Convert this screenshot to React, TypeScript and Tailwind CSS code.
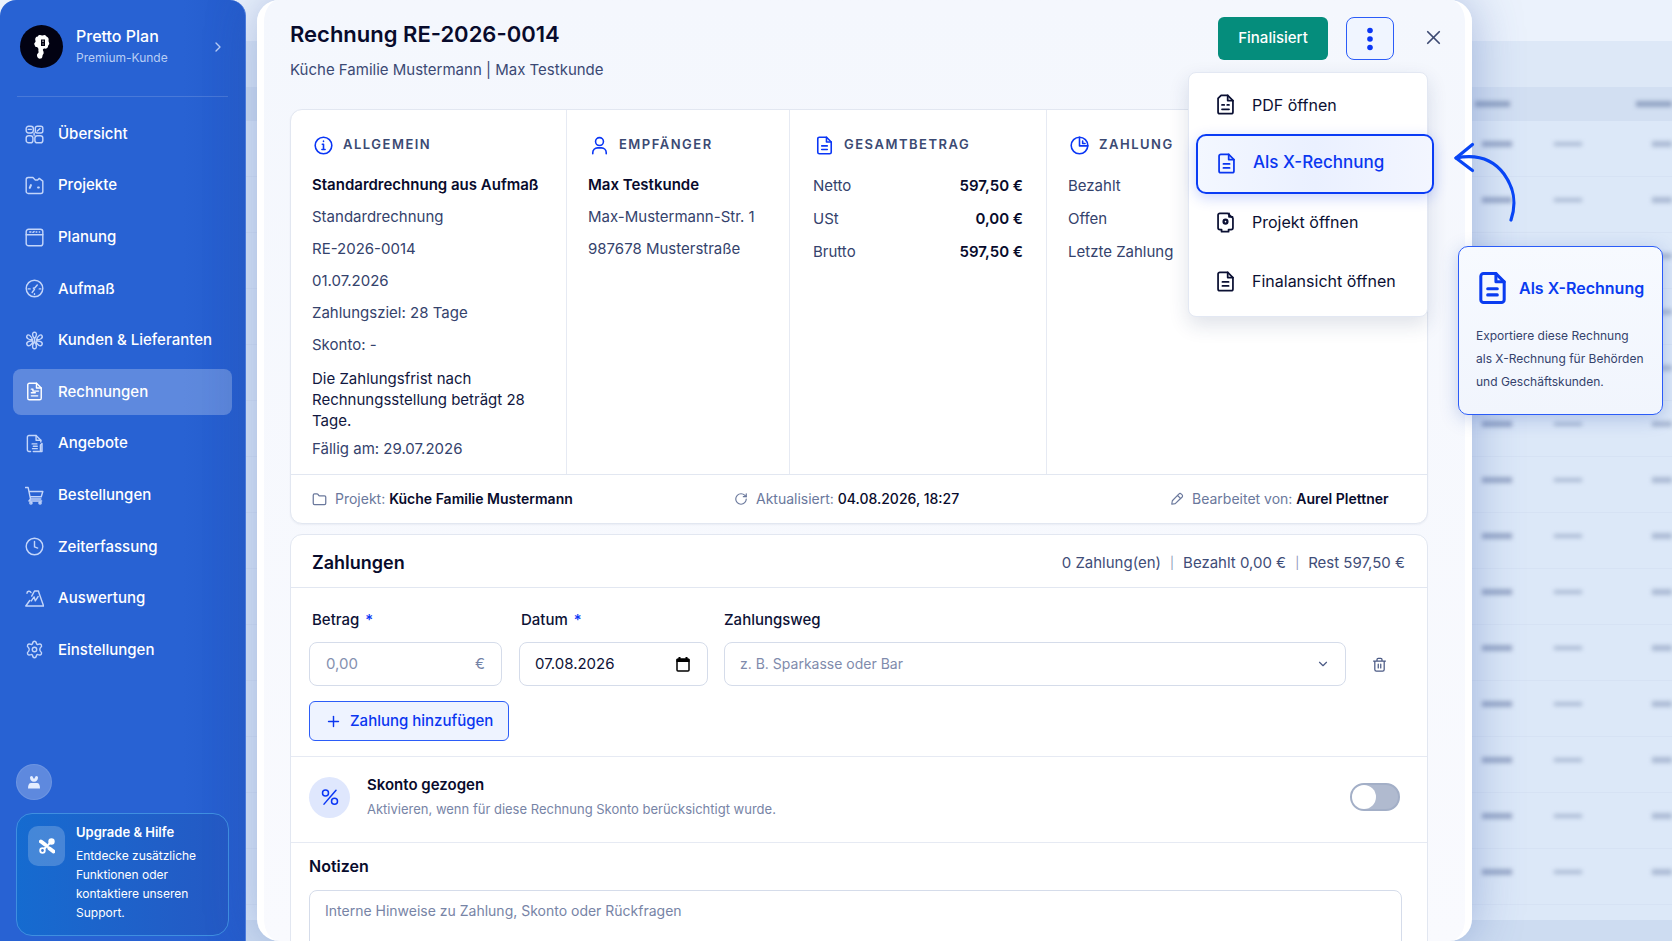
import React from 'react';
import { ChevronDown, ChevronRight, Folder, Plus, RotateCw, X } from 'lucide-react';

type IconProps = { className?: string; strokeWidth?: number };

const Svg: React.FC<IconProps & { children: React.ReactNode }> = ({ className, strokeWidth = 1.8, children }) => (
  <svg
    viewBox="0 0 24 24"
    fill="none"
    stroke="currentColor"
    strokeWidth={strokeWidth}
    strokeLinecap="round"
    strokeLinejoin="round"
    className={className}
    aria-hidden="true"
  >
    {children}
  </svg>
);

const GridIcon = (p: IconProps) => (
  <Svg {...p}>
    <rect x="1.5" y="1.5" width="9" height="8.5" rx="3" />
    <rect x="13" y="1.5" width="9.5" height="8.5" rx="2.5" />
    <rect x="1.5" y="13.5" width="8.5" height="9" rx="3" />
    <rect x="12.5" y="13.5" width="10" height="9" rx="3" />
    <path d="M4 5.5h4M15.5 7.5l3.5-3M11.5 10v3" />
  </Svg>
);

const ProjectIcon = (p: IconProps) => (
  <Svg {...p}>
    <path d="M1.5 4.5a2.5 2.5 0 0 1 2.5-2.5h6l3 3h3l2-2 4.5 3.5v13a2.5 2.5 0 0 1-2.5 2.5H4a2.5 2.5 0 0 1-2.5-2.5z" />
    <path d="M7.5 11.5L6 15M16.5 14.5h1" strokeWidth={2.6} />
  </Svg>
);

const PlanIcon = (p: IconProps) => (
  <Svg {...p}>
    <rect x="1.5" y="1.5" width="21" height="21" rx="3" />
    <path d="M1.5 8.5h21M6 5h1.5M10 5.5l1.5-1M14 5h1M18 5h.5" />
  </Svg>
);

const GaugeIcon = (p: IconProps) => (
  <Svg {...p}>
    <circle cx="12" cy="12" r="10.5" />
    <path d="M15.5 7.5l-3 3.5-2 .5 1.5 1.5-3 4M4 12.5h2.5M18 12.5h2M12 18.5v1" />
  </Svg>
);

const FlowerIcon = (p: IconProps) => (
  <Svg {...p}>
    <path d="M12 9.5c-3-3-3.500-8 0-8s3 5 0 8zM9.500 11C5 11.500 1 9 2.500 6S8 6.500 9.500 11zM14.500 11c4.500.5 8.500-2 7-5s-5.500.5-7 5zM10 13c-4-1-9 1-7.500 4.200S9 18 10 13zM14 13c4-1 9 1 7.500 4.200S15 18 14 13zM12 14c-3 3-3.500 8.500 0 8.500s3-5.500 0-8.500z" />
    <path d="M12 9.500v4.500" />
  </Svg>
);

const DocIcon = (p: IconProps) => (
  <Svg {...p}>
    <path d="M14.500 1.500H5.500a2 2 0 0 0-2 2v17a2 2 0 0 0 2 2h13a2 2 0 0 0 2-2v-13z" />
    <path d="M14.500 1.500v6h6M8.500 12.500h7M8.500 17h7" />
  </Svg>
);

const InvoiceIcon = (p: IconProps) => (
  <Svg {...p}>
    <path d="M14.500 1.500H5.500a2 2 0 0 0-2 2v17a2 2 0 0 0 2 2h13a2 2 0 0 0 2-2v-13z" />
    <path d="M14.500 1.500v6h6M8 9h2v2.500h7M8 13.500h5M8 17.500h8" />
  </Svg>
);

const OfferIcon = (p: IconProps) => (
  <Svg {...p}>
    <path d="M7 22H5a2 2 0 0 1-2-2V4a2 2 0 0 1 2-2h9l6 6v2" />
    <path d="M14 2v6h6M9 12.500h6M10.500 15.500h5M9.500 18.500h6M10.500 22h11v-10l-2 2v7" />
  </Svg>
);

const PdfIcon = (p: IconProps) => (
  <Svg {...p}>
    <path d="M14.500 1.500H7L3.500 5v15.500a2 2 0 0 0 2 2h13a2 2 0 0 0 2-2v-13z" />
    <path d="M14.500 1.500v6h6M8 12.500h2.500M14 12.500h2M8 17.500h8" />
  </Svg>
);

const ProjectDocIcon = (p: IconProps) => (
  <Svg {...p}>
    <path d="M14.500 1.500h-9a2 2 0 0 0-2 2V18a2 2 0 0 0 2 2h2v2.500h8V20h3a2 2 0 0 0 2-2V7z" />
    <path d="M16 1.500v4h4" />
    <circle cx="12" cy="11" r="2.200" strokeWidth={2.6} />
  </Svg>
);

const CartIcon = (p: IconProps) => (
  <Svg {...p}>
    <path d="M.5 2h3.500l3 14.500h13M5.500 7H22.500l-2 6.500H6.500M7 16.500l-2 2.500h16" />
    <circle cx="7.500" cy="21.500" r="1.400" />
    <circle cx="19" cy="21.500" r="1.400" />
  </Svg>
);

const ClockIcon = (p: IconProps) => (
  <Svg {...p}>
    <circle cx="12" cy="12" r="10.500" />
    <path d="M12 5.500v7l4 1.500" />
  </Svg>
);

const ChartIcon = (p: IconProps) => (
  <Svg {...p}>
    <path d="M1 21.500h22.500l-6-17M6 14.500l-5 7M2.500 5.500c0-3 4-3.500 5-1M8.500 9l3.500-6.500h5l.500 2M8 15l3.500-5 1.500 5 3.500-5.500" />
  </Svg>
);

const GearIcon = (p: IconProps) => (
  <Svg {...p}>
    <path d="M9.500 4.500c.5-4 4.500-4 5 0 .3 1 1 1.500 2 1 4-1.500 6 1.800 3 4.300-1 1-1 3.400 0 4.400 3 2.500 1 5.800-3 4.300-1-.5-1.700 0-2 1-.5 4-4.500 4-5 0-.3-1-1-1.500-2-1-4 1.500-6-1.800-3-4.300 1-1 1-3.400 0-4.400-3-2.500-1-5.800 3-4.300 1 .5 1.700 0 2-1z" />
    <circle cx="12" cy="12" r="2.800" />
  </Svg>
);

const InfoIcon = (p: IconProps) => (
  <Svg {...p}>
    <circle cx="12" cy="12" r="10.500" />
    <path d="M10.500 10.500H12V17M10 17h4M12 6.500v.5" />
  </Svg>
);

const PersonIcon = (p: IconProps) => (
  <Svg {...p}>
    <circle cx="12" cy="7" r="5" />
    <path d="M3.500 22.500v-1.500a6 6 0 0 1 6-6h5a6 6 0 0 1 6 6v1.500" />
  </Svg>
);

const PieIcon = (p: IconProps) => (
  <Svg {...p}>
    <circle cx="12" cy="12" r="10.500" />
    <path d="M12 1.500V12.500h10.500M16 6.500v3h3" />
  </Svg>
);

const PencilIcon = (p: IconProps) => (
  <Svg {...p}>
    <path d="M3 21l1-6L15 3.500a3 3 0 0 1 4.500 0l1 1a3 3 0 0 1 0 4.500L9 20zM13 6l5 5-6 6" />
  </Svg>
);

const TrashIcon = (p: IconProps) => (
  <Svg {...p}>
    <path d="M2.500 6.500h19M8 6.500V4a2 2 0 0 1 2-2h4a2 2 0 0 1 2 2v2.500M4.500 6.500v13.500a2.500 2.500 0 0 0 2.500 2.500h10a2.500 2.500 0 0 0 2.500-2.500V6.500M10 11.500v6M14 11.500v6" />
  </Svg>
);

const PercentIcon = (p: IconProps) => (
  <Svg {...p}>
    <circle cx="6" cy="6.500" r="4" />
    <circle cx="18" cy="17.500" r="4" />
    <path d="M20 3L4 21.500" />
  </Svg>
);

const CalendarIcon = ({ className }: IconProps) => (
  <svg viewBox="0 0 16 17" fill="none" stroke="currentColor" className={className} aria-hidden="true">
    <rect x="2" y="3" width="12" height="12" rx="1" strokeWidth="1.5" />
    <path d="M1.500 4.500h13" strokeWidth="3" />
    <path d="M4.500 1v3M11.500 1v3" strokeWidth="2" />
  </svg>
);

const navItems = [
  { label: 'Übersicht', icon: GridIcon },
  { label: 'Projekte', icon: ProjectIcon },
  { label: 'Planung', icon: PlanIcon },
  { label: 'Aufmaß', icon: GaugeIcon },
  { label: 'Kunden & Lieferanten', icon: FlowerIcon },
  { label: 'Rechnungen', icon: InvoiceIcon, active: true },
  { label: 'Angebote', icon: OfferIcon },
  { label: 'Bestellungen', icon: CartIcon },
  { label: 'Zeiterfassung', icon: ClockIcon },
  { label: 'Auswertung', icon: ChartIcon },
  { label: 'Einstellungen', icon: GearIcon },
];

const totals = [
  ['Netto', '597,50 €'],
  ['USt', '0,00 €'],
  ['Brutto', '597,50 €'],
];

const Sidebar: React.FC = () => (
  <aside className="flex w-[246px] shrink-0 flex-col rounded-t-2xl border-r border-[#4f7fe0] bg-linear-to-r from-[#2862d3] from-75% to-[#245bcb] px-[13px] text-white">
    <button className="mx-1 flex h-[97px] items-center border-b border-white/15 pb-[3px] pl-[3px] text-left">
      <span className="flex size-[43px] items-center justify-center rounded-full bg-[#020212]">
        <svg viewBox="0 0 18 26" className="h-[26px] w-[18px]" aria-hidden="true">
          <path
            fill="#fff"
            fillRule="evenodd"
            d="M5 2c1-1.500 3-1 4-.5s3-1.500 4 .5c.5 1 2 1 2.500 2.500s-.5 2 .5 4-1 2.500-1 4-2 2.500-3.500 2c-1-.3-2 1-1.500 2 .8 1.500 1 3 0 4s0 3.500-2 4-4-.5-4-3 2-2 1.500-4 .5-2-.5-3.500-2.500 0-3-2S.500 10 2 8.500 1.500 6 2.500 4 4 3.500 5 2zM8 5.500v6.500h4V5.500z"
          />
          <path fill="#fff" d="M9.500 6.500h1v1.500h-1zM9.500 9.500h1v1h-1z" />
        </svg>
      </span>
      <span className="ml-[13px] flex-1">
        <span className="block text-base leading-[22px] font-medium">Pretto Plan</span>
        <span className="block text-xs leading-[22px] text-[#b9cef5]">Premium-Kunde</span>
      </span>
      <ChevronRight className="mr-0.5 size-4 text-[#b9cef5]" />
    </button>

    <nav className="mt-3.5 flex flex-1 flex-col justify-between">
      {navItems.map(({ label, icon: Icon, active }) => (
        <a
          key={label}
          href="#"
          className={`flex h-[46px] items-center gap-[14px] rounded-lg pl-3 text-[15px] font-medium ${active ? 'bg-white/25' : ''}`}
        >
          <Icon className={`size-[19px] ${active ? 'text-white' : 'text-[#c3d5fa]'}`} />
          {label}
        </a>
      ))}
    </nav>

    <button
      aria-label="Profil"
      className="mt-[91px] ml-[3px] flex size-9 items-center justify-center rounded-full border border-white/10 bg-white/25"
    >
      <svg viewBox="0 0 14 14" className="size-3.5" fill="#e4edff" aria-hidden="true">
        <path d="M1 13.500c0-3.500 1-5.500 3-5.500h6c2 0 3 2 3 5.500z" />
        <path d="M3 2.500a1.500 1.500 0 0 1 3 0l1 1.500 1-1.500a1.500 1.500 0 0 1 3 0c0 2.500-1.500 4.200-4 4.200s-4-1.700-4-4.200z" />
      </svg>
    </button>

    <section className="mx-[3px] mt-[13px] mb-[5px] flex h-[123px] gap-[11px] rounded-2xl border border-[#3f8fe0] bg-linear-to-r from-[#156bd0] to-[#2459c4] pt-2.5 pl-[11px]">
      <span className="mt-0.5 flex h-10 w-[37px] shrink-0 items-center justify-center rounded-[10px] bg-white/20">
        <svg viewBox="0 0 16 16" className="size-4" aria-hidden="true">
          <path d="M2 3.500l4 3M10.500 10.500l4 3" stroke="#fff" strokeWidth="4" strokeLinecap="round" />
          <path d="M6 6l4.500 4.500M11 5L5 11" stroke="#fff" strokeWidth="2" />
          <circle cx="12.500" cy="3.500" r="3.200" fill="#fff" />
          <circle cx="3.500" cy="12.500" r="2.300" fill="#3a78d4" stroke="#fff" strokeWidth="1.800" />
        </svg>
      </span>
      <div>
        <h2 className="text-[13px] leading-4 font-semibold">Upgrade &amp; Hilfe</h2>
        <p className="mt-1.5 w-[130px] text-xs leading-[19px]">
          Entdecke zusätzliche Funktionen oder kontaktiere unseren Support.
        </p>
      </div>
    </section>
  </aside>
);

const ColumnTitle: React.FC<{ icon: React.FC<IconProps>; children: string }> = ({ icon: Icon, children }) => (
  <h2 className="mb-3 flex h-6 items-center gap-2.5 pl-0.5 text-[13px] font-semibold tracking-[1.5px] text-[#3b4a73]">
    <Icon className="size-[19px] text-[#0a36f5]" strokeWidth={2} />
    {children}
  </h2>
);

const ActionMenu: React.FC = () => (
  <div
    role="menu"
    className="absolute top-[72px] right-[37px] z-10 w-[240px] rounded-lg border border-[#e3e8f3] bg-white pb-1 text-base text-[#0b1033] shadow-[0_8px_20px_rgba(30,50,100,0.14)]"
  >
    <button role="menuitem" className="flex h-[61px] w-full items-center gap-4 pt-0.5 pl-[26px]">
      <PdfIcon className="size-[21px]" strokeWidth={2} />
      PDF öffnen
    </button>
    <button
      role="menuitem"
      className="ml-[7px] flex h-[60px] w-[238px] items-center gap-4 rounded-[10px] border-2 border-[#0a3cf5] bg-linear-to-r from-[#f3f7ff] via-[#eaf0ff] to-[#f3f6ff] pb-0.5 pl-[18px] text-[17px] font-medium text-[#0a36f0] shadow-[0_4px_14px_rgba(20,70,240,0.22)]"
    >
      <DocIcon className="size-[21px]" strokeWidth={2} />
      Als X-Rechnung
    </button>
    <button role="menuitem" className="flex h-[59px] w-full items-center gap-4 pb-[3px] pl-[26px]">
      <ProjectDocIcon className="size-[21px]" strokeWidth={2} />
      Projekt öffnen
    </button>
    <button role="menuitem" className="flex h-[59px] w-full items-center gap-4 pb-[3px] pl-[26px]">
      <DocIcon className="size-[21px]" strokeWidth={2} />
      Finalansicht öffnen
    </button>
  </div>
);

const InvoiceCard: React.FC = () => (
  <section className="rounded-xl border border-[#e2e7f1] bg-white text-[15px] shadow-[0_1px_2px_rgba(30,50,100,0.06)]">
    <div className="grid grid-cols-[276fr_223fr_257fr_380fr] divide-x divide-[#e6eaf3] text-[#34426c]">
      <div className="px-[21px] pt-[23px] pb-[9px]">
        <ColumnTitle icon={InfoIcon}>ALLGEMEIN</ColumnTitle>
        <p className="leading-8 font-semibold whitespace-nowrap text-[#080b2c]">Standardrechnung aus Aufmaß</p>
        <p className="leading-8">Standardrechnung</p>
        <p className="leading-8">RE-2026-0014</p>
        <p className="leading-8">01.07.2026</p>
        <p className="leading-8">Zahlungsziel: 28 Tage</p>
        <p className="leading-8">Skonto: -</p>
        <p className="my-[7px] mb-0.5 leading-[21px] text-[#111740]">
          Die Zahlungsfrist nach Rechnungsstellung beträgt 28 Tage.
        </p>
        <p className="leading-8">Fällig am: 29.07.2026</p>
      </div>
      <div className="px-[21px] pt-[23px]">
        <ColumnTitle icon={PersonIcon}>EMPFÄNGER</ColumnTitle>
        <p className="leading-8 font-semibold text-[#080b2c]">Max Testkunde</p>
        <p className="leading-8">Max-Mustermann-Str. 1</p>
        <p className="leading-8">987678 Musterstraße</p>
      </div>
      <div className="px-[23px] pt-[23px]">
        <ColumnTitle icon={DocIcon}>GESAMTBETRAG</ColumnTitle>
        <dl>
          {totals.map(([label, value]) => (
            <div key={label} className="flex justify-between leading-[33px]">
              <dt>{label}</dt>
              <dd className="font-semibold text-[#080b2c]">{value}</dd>
            </div>
          ))}
        </dl>
      </div>
      <div className="px-[21px] pt-[23px]">
        <ColumnTitle icon={PieIcon}>ZAHLUNG</ColumnTitle>
        <p className="leading-[33px]">Bezahlt</p>
        <p className="leading-[33px]">Offen</p>
        <p className="leading-[33px]">Letzte Zahlung</p>
      </div>
    </div>
    <div className="grid h-[49px] grid-cols-[422fr_436fr_257fr] items-center border-t border-[#e2e7f1] pl-[21px] text-sm text-[#6a789c]">
      <p className="flex items-center gap-2">
        <Folder className="size-[15px]" />
        <span>
          Projekt: <strong className="font-semibold text-[#080b2c]">Küche Familie Mustermann</strong>
        </span>
      </p>
      <p className="flex items-center gap-2">
        <RotateCw className="size-3.5" />
        <span>
          Aktualisiert: <strong className="font-medium text-[#080b2c]">04.08.2026, 18:27</strong>
        </span>
      </p>
      <p className="flex items-center gap-2">
        <PencilIcon className="size-3.5" strokeWidth={2} />
        <span>
          Bearbeitet von: <strong className="font-semibold text-[#080b2c]">Aurel Plettner</strong>
        </span>
      </p>
    </div>
  </section>
);

const PaymentsCard: React.FC = () => (
  <section className="mt-2.5 rounded-t-xl border border-[#e2e7f1] bg-white">
    <header className="flex h-[53px] items-center justify-between border-b border-[#e2e7f1] pt-1 pr-[22px] pl-[21px]">
      <h2 className="text-lg font-semibold text-[#080b2c]">Zahlungen</h2>
      <p className="flex items-center gap-[9px] text-[15px] text-[#3f4d78]">
        <span>0 Zahlung(en)</span>
        <span className="text-xs text-[#8c98b8]">|</span>
        <span>Bezahlt 0,00 €</span>
        <span className="text-xs text-[#8c98b8]">|</span>
        <span>Rest 597,50 €</span>
      </p>
    </header>

    <form className="border-b border-[#e6eaf3] px-[18px] pb-[15px]">
      <div className="flex items-end text-[15px] text-[#0d1236]">
        <div className="w-[193px]">
          <label htmlFor="betrag" className="ml-[3px] block pt-5 leading-6 font-medium">
            Betrag <span className="ml-0.5 text-[#0a36f5]">*</span>
          </label>
          <div className="mt-2.5 flex h-11 items-center rounded-lg border border-[#d5dcea] pr-4 pl-4 text-[#7482a6]">
            <input id="betrag" placeholder="0,00" className="w-full min-w-0 outline-none placeholder:text-[#8591b0]" />
            <span>€</span>
          </div>
        </div>
        <div className="ml-[17px] w-[189px]">
          <label htmlFor="datum" className="ml-0.5 block pt-5 leading-6 font-medium">
            Datum <span className="ml-0.5 text-[#0a36f5]">*</span>
          </label>
          <div className="mt-2.5 flex h-11 items-center rounded-lg border border-[#d5dcea] pr-4 pl-[15px]">
            <input id="datum" defaultValue="07.08.2026" className="w-full min-w-0 outline-none" />
            <CalendarIcon className="h-[17px] w-4 shrink-0 text-black" />
          </div>
        </div>
        <div className="ml-4 flex-1">
          <label htmlFor="zahlungsweg" className="block pt-5 leading-6 font-medium">
            Zahlungsweg
          </label>
          <div className="mt-2.5 grid h-11 items-center rounded-lg border border-[#d5dcea]">
            <select
              id="zahlungsweg"
              className="col-start-1 row-start-1 h-full w-full appearance-none pl-[15px] text-sm text-[#7f8bac] outline-none"
            >
              <option>z. B. Sparkasse oder Bar</option>
            </select>
            <ChevronDown className="pointer-events-none col-start-1 row-start-1 mr-[15px] size-3.5 justify-self-end text-[#4b5a85]" />
          </div>
        </div>
        <button type="button" aria-label="Zahlung löschen" className="mr-5 ml-[23px] flex h-11 w-5 items-center justify-center text-[#4b5a85]">
          <TrashIcon className="size-[15px]" strokeWidth={2} />
        </button>
      </div>
      <button
        type="button"
        className="mt-[15px] flex h-10 items-center gap-2 rounded-md border border-[#2b5cf8] bg-[#eef3ff] px-[15px] text-[15px] font-medium text-[#0a36f0]"
      >
        <Plus className="size-[17px]" />
        Zahlung hinzufügen
      </button>
    </form>

    <div className="flex h-[86px] items-center border-b border-[#e6eaf3] pr-[27px] pb-[5px] pl-[18px]">
      <span className="flex size-[41px] items-center justify-center rounded-full bg-[#dfe7fd]">
        <PercentIcon className="size-[18px] text-[#0a36f5]" strokeWidth={2} />
      </span>
      <label htmlFor="skonto" className="ml-[17px] flex-1">
        <span className="block text-[15px] leading-6 font-semibold text-[#080b2c]">Skonto gezogen</span>
        <span className="block text-[13px] leading-6 text-[#7784a6]">Aktivieren, wenn für diese Rechnung Skonto berücksichtigt wurde.</span>
      </label>
      <input
        id="skonto"
        type="checkbox"
        role="switch"
        className="h-7 w-[50px] appearance-none rounded-full border-2 border-[#a3afc7] bg-[#b0bacf] before:block before:size-6 before:rounded-full before:bg-white checked:bg-[#0a36f5] checked:before:ml-[22px]"
      />
    </div>

    <div className="pt-[11px] pr-[25px] pl-[18px]">
      <label htmlFor="notizen" className="block text-base leading-6 font-semibold text-[#080b2c]">
        Notizen
      </label>
      <textarea
        id="notizen"
        placeholder="Interne Hinweise zu Zahlung, Skonto oder Rückfragen"
        className="mt-3 block h-[120px] w-full resize-none rounded-lg border border-[#d5dcea] px-[15px] py-2 text-sm leading-6 outline-none placeholder:text-[#7784a6]"
      />
    </div>
  </section>
);

// Blurred invoice list that lies behind the dialog
const Backdrop: React.FC = () => (
  <div className="absolute inset-0 flex flex-col overflow-hidden bg-[#dce8f8]" aria-hidden="true">
    <div className="h-[41px] shrink-0 bg-[#ebf2fc]" />
    <div className="h-[46px] shrink-0 bg-[#dde8f7]" />
    <div className="flex h-[34px] shrink-0 items-center justify-end bg-[#d2dff2]">
      <span className="mr-[126px] h-1.5 w-[35px] bg-[#94a5c4] blur-[2px]" />
      <span className="h-1.5 w-9 bg-[#94a5c4] blur-[2px]" />
    </div>
    <div className="flex-1 overflow-hidden">
      {Array.from({ length: 14 }, (_, i) => (
        <div key={i} className="flex h-14 items-center justify-end border-b border-[#d6e2f4] pb-2.5">
          <span className="mr-[42px] h-1.5 w-[30px] bg-[#9cacca] blur-[2px]" />
          <span className="mr-[70px] h-1 w-7 bg-[#acbbd5] blur-[2px]" />
          <span className="h-1.5 w-5 bg-[#acbbd5] blur-[2px]" />
        </div>
      ))}
    </div>
    <div className="h-[21px] shrink-0 bg-[#cddcf1]" />
  </div>
);

const App: React.FC = () => {
  return (
    <div className="relative flex h-screen overflow-hidden font-[Inter,'Liberation_Sans',sans-serif]">
      <Backdrop />
      <div className="relative flex w-full gap-[11px]">
        <Sidebar />
        <main className="relative mr-[200px] min-w-0 flex-1 rounded-[22px] border-x-[7px] border-white bg-linear-to-b from-[#f4f7fd] to-[#f9fafe] shadow-[0_0_50px_rgba(60,95,175,0.4)]">
          <header className="flex h-[109px] items-start pr-5 pl-[26px]">
            <div className="flex-1 pt-5">
              <h1 className="text-[22px] leading-7 font-semibold text-[#080b2c]">Rechnung RE-2026-0014</h1>
              <p className="mt-2.5 text-[15px] leading-6 text-[#3b4974]">Küche Familie Mustermann | Max Testkunde</p>
            </div>
            <button className="mt-[17px] h-[43px] w-[110px] rounded-md bg-[#058d7c] text-[15px] font-medium text-white">Finalisiert</button>
            <button
              aria-label="Weitere Aktionen"
              className="mt-[17px] ml-[18px] flex h-[43px] w-12 items-center justify-center rounded-lg border border-[#2b5cf8] bg-[#f0f5ff]"
            >
              <svg viewBox="0 0 6 24" className="h-6 w-1.5" fill="#0a36f5" aria-hidden="true">
                <circle cx="3" cy="3.500" r="2.800" />
                <circle cx="3" cy="12" r="2.800" />
                <circle cx="3" cy="20.500" r="2.800" />
              </svg>
            </button>
            <button aria-label="Schließen" className="mt-[26px] ml-7 text-[#3d4a72]">
              <X className="size-[23px]" strokeWidth={1.8} />
            </button>
          </header>
          <ActionMenu />
          <div className="h-[832px] overflow-hidden pr-[37px] pl-[26px]">
            <InvoiceCard />
            <PaymentsCard />
          </div>
        </main>
      </div>

      <svg
        viewBox="0 0 66 84"
        className="absolute top-[140px] right-[154px] z-20 h-[84px] w-[66px]"
        fill="none"
        stroke="#0845f5"
        strokeWidth="3.200"
        strokeLinecap="round"
        strokeLinejoin="round"
        aria-hidden="true"
      >
        <path d="M20.500 4.500L4 18 20.500 30.500" />
        <path d="M4 18C24 14 40 18 52 34c10 14 13 28 7 46" />
      </svg>
      <aside className="absolute top-[246px] right-[9px] z-20 w-[205px] rounded-[10px] border border-[#2b5cf8] bg-linear-to-b from-[#f7faff] to-[#f1f5fd] px-[17px] pt-[23px] pb-[21px] shadow-[0_4px_18px_rgba(40,80,180,0.25)]">
        <h2 className="flex items-center gap-2.5 text-base font-semibold whitespace-nowrap text-[#0a3cf0]">
          <DocIcon className="h-9 w-[33px] shrink-0" strokeWidth={2.2} />
          Als X-Rechnung
        </h2>
        <p className="mt-[18px] text-xs leading-[23px] whitespace-nowrap text-[#34426c]">
          Exportiere diese Rechnung
          <br />
          als X-Rechnung für Behörden
          <br />
          und Geschäftskunden.
        </p>
      </aside>
    </div>
  );
};

export default App;
